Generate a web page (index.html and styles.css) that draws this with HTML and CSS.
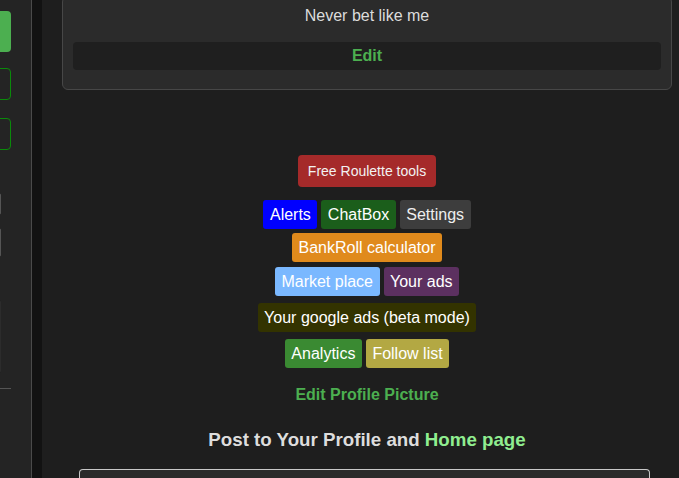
FILE: index.html
```html
<!DOCTYPE html>
<html lang="en">
<head>
<meta charset="utf-8">
<title>Profile</title>
<link rel="stylesheet" href="styles.css">
</head>
<body>
<div class="layout">
  <aside class="sidebar">
    <div class="side-btn side-btn-solid"></div>
    <div class="side-btn side-btn-outline first-outline"></div>
    <div class="side-btn side-btn-outline second-outline"></div>
    <div class="side-input input-a"></div>
    <div class="side-input input-b"></div>
    <div class="side-input input-faint"></div>
    <div class="side-rule"></div>
  </aside>
  <div class="gutter"></div>
  <main class="main">
    <section class="card">
      <p class="bio">Never bet like me</p>
      <button class="edit-btn" type="button">Edit</button>
    </section>

    <nav class="tools">
      <div class="tool-row row-top">
        <a class="tool tool-lg c-roulette">Free Roulette tools</a>
      </div>
      <div class="tool-row row-2">
        <a class="tool c-alerts">Alerts</a>
        <a class="tool c-chat">ChatBox</a>
        <a class="tool c-settings">Settings</a>
      </div>
      <div class="tool-row row-n">
        <a class="tool c-bank">BankRoll calculator</a>
      </div>
      <div class="tool-row row-n">
        <a class="tool c-market">Market place</a>
        <a class="tool c-ads">Your ads</a>
      </div>
      <div class="tool-row row-w">
        <a class="tool c-google">Your google ads (beta mode)</a>
      </div>
      <div class="tool-row row-w">
        <a class="tool c-analytics">Analytics</a>
        <a class="tool c-follow">Follow list</a>
      </div>
    </nav>

    <a class="edit-pic">Edit Profile Picture</a>

    <h3 class="post-title">Post to Your Profile and <span class="hl">Home page</span></h3>

    <div class="post-box"></div>
  </main>
</div>
</body>
</html>
```

FILE: styles.css
```css
* { box-sizing: border-box; }

html, body {
  margin: 0;
  padding: 0;
  height: 478px;
  overflow: hidden;
  background: #1e1e1e;
  font-family: "Liberation Sans", Arial, sans-serif;
}

.layout {
  display: grid;
  grid-template-columns: 32px 10px 1fr;
  height: 478px;
}

/* ---------- sidebar ---------- */
.sidebar {
  background: #242424;
  border-right: 1px solid #4a4a4a;
  overflow: hidden;
  display: flex;
  flex-direction: column;
  align-items: flex-end;
  padding: 11px 20px 0 0;
}

.side-btn {
  width: 120px;
  flex: none;
  border-radius: 4px;
}
.side-btn-solid {
  height: 41px;
  background: #4caf50;
}
.side-btn-outline {
  height: 31.5px;
  border: 1px solid #0a8a0a;
}
.first-outline { margin-top: 16px; }
.second-outline { margin-top: 18.5px; }

.side-input {
  width: 120px;
  flex: none;
  border: 1px solid #555;
  border-radius: 2px;
  margin-right: 10px;
}
.input-a { height: 22px; margin-top: 43.5px; }
.input-b { height: 29px; margin-top: 13px; }
.input-faint { height: 73px; margin-top: 43px; border-color: #2c2c2c; }

.side-rule {
  width: 120px;
  flex: none;
  height: 1px;
  background: #555;
  margin-top: 15px;
}

.gutter { background: #121212; }

/* ---------- main ---------- */
.main {
  padding: 0 7px 0 20px;
  display: flex;
  flex-direction: column;
  align-items: stretch;
  overflow: hidden;
}

.card {
  margin-top: -4px;
  background: #2b2b2b;
  border: 1px solid #474747;
  border-radius: 6px;
  padding: 10px 10px 19px;
}

.bio {
  margin: 0 0 17px;
  text-align: center;
  color: #dcdcdc;
  font-size: 16px;
  line-height: 18px;
}

.edit-btn {
  display: block;
  width: 100%;
  height: 28px;
  border: none;
  border-radius: 4px;
  background: #1f1f1f;
  color: #4caf50;
  font-family: inherit;
  font-weight: bold;
  font-size: 16px;
  line-height: 18px;
  padding: 5px 0;
  cursor: pointer;
}

/* ---------- tools ---------- */
.tools {
  display: flex;
  flex-direction: column;
  align-items: center;
  margin-top: 65px;
}

.tool-row {
  display: flex;
  justify-content: center;
  gap: 4px;
}
.row-2 { margin-top: 12.5px; }
.row-n { margin-top: 4.8px; }
.row-w { margin-top: 7.1px; }

.tool {
  display: block;
  color: #fff;
  font-size: 16px;
  line-height: 19px;
  padding: 5px 6.5px;
  border-radius: 3px;
  white-space: nowrap;
}
.tool-lg {
  font-size: 14px;
  line-height: 16px;
  padding: 8px 10px;
  border-radius: 4px;
  color: #f2f2f2;
}

.c-roulette { background: #a52a2a; }
.c-alerts { background: #0000ff; }
.c-chat { background: #1b5e1b; }
.c-settings { background: #3d3d3d; color: #eee; }
.c-bank { background: #e08a1c; }
.c-market { background: #7ab8ff; }
.c-ads { background: #5c3060; }
.c-google { background: #333300; }
.c-analytics { background: #3a8a32; }
.c-follow { background: #b3a843; }

.edit-pic {
  align-self: center;
  margin-top: 17.5px;
  color: #4caf50;
  font-weight: bold;
  font-size: 16px;
  line-height: 18px;
}

.post-title {
  margin: 25px 0 0;
  text-align: center;
  color: #dddddd;
  font-size: 18.72px;
  line-height: 22px;
  font-weight: bold;
}
.hl { color: #90ee90; }

.post-box {
  margin: 18px 22px 0 17px;
  height: 10px;
  flex: none;
  background: #2b2b2b;
  border: 1px solid #c8c8c8;
  border-bottom: none;
  border-radius: 4px 4px 0 0;
}
```
